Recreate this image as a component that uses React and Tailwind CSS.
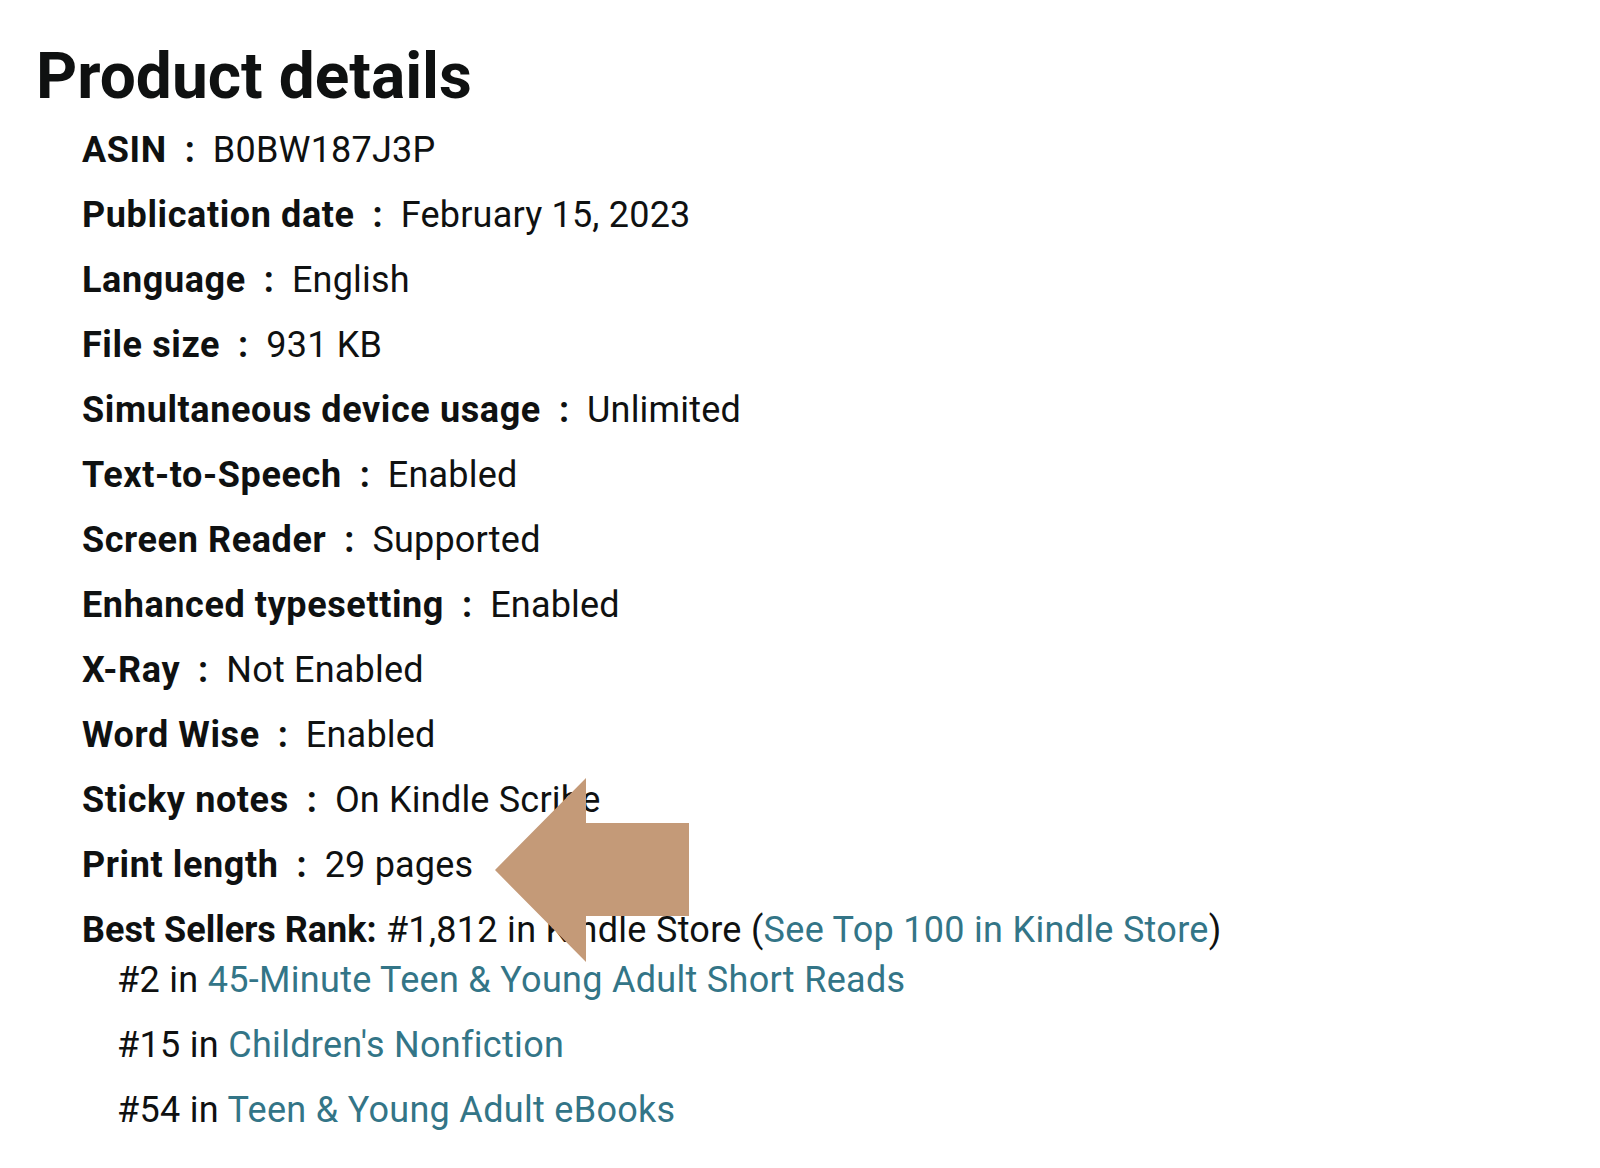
import React from "react";

const details = [
  ["ASIN", "B0BW187J3P"],
  ["Publication date", "February 15, 2023"],
  ["Language", "English"],
  ["File size", "931 KB"],
  ["Simultaneous device usage", "Unlimited"],
  ["Text-to-Speech", "Enabled"],
  ["Screen Reader", "Supported"],
  ["Enhanced typesetting", "Enabled"],
  ["X-Ray", "Not Enabled"],
  ["Word Wise", "Enabled"],
  ["Sticky notes", "On Kindle Scribe"],
  ["Print length", "29 pages"],
];

const ranks = [
  ["#2", "45-Minute Teen & Young Adult Short Reads"],
  ["#15", "Children's Nonfiction"],
  ["#54", "Teen & Young Adult eBooks"],
];

const App = () => {
  return (
    <div
      className="relative w-[1600px] h-[1168px] bg-white text-[#0f1111] overflow-hidden"
      style={{ fontFamily: "Roboto, 'Noto Sans', Arial, sans-serif" }}
    >
      <div className="pl-[36px] pt-[45px]">
        <h1 className="text-[64px] leading-[64px] font-bold">Product details</h1>
      </div>

      <ul className="pl-[82px] pt-[9px] text-[36px] leading-[65px]">
        {details.map(([label, value]) => (
          <li key={label} className="whitespace-nowrap">
            <span className="font-bold tracking-[0.6px]">{label}</span>
            <span className="font-bold mx-[18px]">:</span>
            <span className="tracking-[0.2px]">{value}</span>
          </li>
        ))}
        <li className="whitespace-nowrap tracking-[0.3px]">
          <span className="font-bold tracking-normal">Best Sellers Rank:</span> #1,812 in Kindle
          Store (<a className="text-[#337587]">See Top 100 in Kindle Store</a>)
          {/* sub categories */}
          <ul className="pl-[35px] -mt-[15px]">
            {ranks.map(([rank, cat]) => (
              <li key={cat}>
                {rank} in <a className="text-[#337587]">{cat}</a>
              </li>
            ))}
          </ul>
        </li>
      </ul>

      {/* annotation arrow */}
      <svg
        className="absolute left-0 top-0 pointer-events-none"
        width="1600"
        height="1168"
      >
        <polygon
          points="495,870 586,778 586,823 689,823 689,916 586,916 586,962"
          fill="#c49a78"
        />
      </svg>
    </div>
  );
};

export default App;
